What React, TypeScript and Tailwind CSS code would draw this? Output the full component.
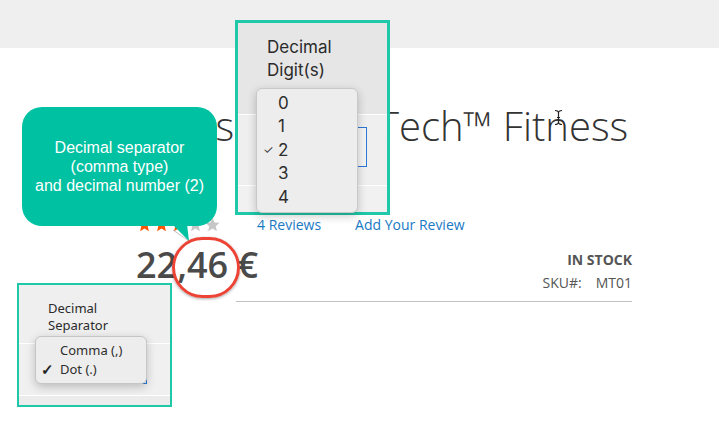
import React from "react";

function Star({ filled }: { filled: boolean }) {
  return (
    <svg width="17" height="17" viewBox="0 0 24 24" className="shrink-0">
      <path
        d="M12 2.5l2.9 6.6 7.1.6-5.4 4.7 1.6 7-6.2-3.7-6.2 3.7 1.6-7L2 9.7l7.1-.6z"
        fill={filled ? "#ff5501" : "#c7c7c7"}
      />
    </svg>
  );
}

function DigitsPanel() {
  const options = ["0", "1", "2", "3", "4"];
  return (
    <div className="absolute left-[235px] top-[20px] h-[195px] w-[155px] border-[3px] border-[#1ec8a8] bg-[#f1f1f1] font-['Inter',sans-serif]">
      <div className="flex h-[92px] flex-col border-b border-white bg-[#e6e6e6] pl-[29px] pt-[13px] text-[17px] leading-[23px] text-[#2b2b2b]">
        <span>Decimal</span>
        <span>Digit(s)</span>
      </div>
      <div className="h-[71px] border-b border-white bg-[#efefef] pl-[31px] pr-[20px] pt-[12px]">
        <div className="h-[40px] border border-[#2a78d6] bg-[#f4f4f4]" />
      </div>

      <div className="absolute left-[18px] top-[65px] w-[102px] rounded-[6px] border border-[#c9c9c9] bg-[#ededed] py-[3px] shadow-[0_3px_10px_rgba(0,0,0,0.22)]">
        {options.map((o) => (
          <div
            key={o}
            className="flex h-[23.4px] items-center text-[17px] text-[#2e2e2e]">
            <span className="w-[21px] pl-[6px] text-[12px] text-[#444]">
              {o === "2" ? "✓" : ""}
            </span>
            <span>{o}</span>
          </div>
        ))}
      </div>
    </div>
  );
}

function SeparatorPanel() {
  return (
    <div className="absolute left-[17px] top-[283px] h-[124px] w-[155px] border-2 border-[#1ec8a8] bg-[#ececec] font-['Noto_Sans',sans-serif]">
      <div className="flex h-[59px] flex-col border-b border-white bg-[#efefef] pl-[29px] pt-[15px] text-[13px] leading-[17px] text-[#2b2b2b]">
        <span>Decimal</span>
        <span>Separator</span>
      </div>
      <div className="h-[52px] border-b border-white bg-[#f0f0f0] pl-[29px] pr-[23px] pt-[15px]">
        <div className="h-[25px] border border-[#2a78d6] bg-[#f6f6f6]" />
      </div>

      <div className="absolute left-[16px] top-[51px] w-[112px] rounded-[6px] border border-[#c6c6c6] bg-[#ededed] py-[4px] shadow-[0_3px_10px_rgba(0,0,0,0.22)]">
        {["Comma (,)", "Dot (.)"].map((o) => (
          <div
            key={o}
            className="flex h-[19px] items-center text-[13px] text-[#2e2e2e]">
            <span className="w-[24px] pl-[5px] text-[15px] font-bold text-[#222]">
              {o === "Dot (.)" ? "✓" : ""}
            </span>
            <span>{o}</span>
          </div>
        ))}
      </div>
    </div>
  );
}

export default function App() {
  return (
    <div className="relative h-[422px] w-[719px] overflow-hidden bg-white font-['Open_Sans',sans-serif]">
      <div className="h-[48px] bg-[#efefef]" />

      <main className="ml-[136px] w-[496px] pt-[54px]">
        <h1 className="text-[40px] font-light leading-[48px] text-[#333]">
          <span className="block whitespace-nowrap">Press ProFlexTech™ Fitness</span>
          <span className="block">Kits</span>
        </h1>

        <div className="mt-[16px] flex h-[20px] items-center text-[14px] text-[#1979c3]">
          <div className="flex">
            {[true, true, true, false, false].map((f, i) => (
              <Star key={i} filled={f} />
            ))}
          </div>
          <a className="ml-[36px]">4 Reviews</a>
          <a className="ml-[34px]">Add Your Review</a>
        </div>

        <div className="mt-[10px] flex items-start justify-between">
          <span className="text-[36px] font-semibold leading-[42px] text-[#4a4a4a]">
            22,46 €
          </span>
          <div className="mt-[4px] flex flex-col items-end text-[14px] leading-[23px] text-[#555]">
            <span className="font-bold">IN STOCK</span>
            <span>
              SKU#:<span className="ml-[14px]">MT01</span>
            </span>
          </div>
        </div>

        <div className="ml-[100px] mt-[7px] border-t border-[#c1c1c1]" />
      </main>

      {/* callout */}
      <div className="absolute left-[22px] top-[107px] flex h-[119px] w-[195px] flex-col items-center justify-center rounded-[20px] bg-[#00c1a1] text-center font-['Liberation_Sans',sans-serif] text-[16px] leading-[19px] text-white">
        <span>Decimal separator</span>
        <span>(comma type)</span>
        <span>and decimal number (2)</span>
      </div>
      <svg
        className="absolute left-[170px] top-[224px]"
        width="24"
        height="20"
        viewBox="0 0 24 20">
        <path d="M3 6 L19 17" stroke="#9a9a9a" strokeWidth="1" opacity="0.6" />
        <path d="M2 0 L17 0 L19 17 Z" fill="#00c1a1" />
      </svg>

      {/* red circle */}
      <div className="absolute left-[172px] top-[237px] h-[61px] w-[68px] rounded-full border-[3px] border-[#ec4335] shadow-[0_1px_3px_rgba(0,0,0,0.35)]" />

      <DigitsPanel />
      <SeparatorPanel />

      {/* text cursor */}
      <svg
        className="absolute left-[554px] top-[109px]"
        width="9"
        height="17"
        viewBox="0 0 9 17">
        <path
          d="M1 1.5 Q4.5 1.5 4.5 4 L4.5 13 Q4.5 15.5 1 15.5 M8 1.5 Q4.5 1.5 4.5 4 M4.5 13 Q4.5 15.5 8 15.5 M3 8.5 L6 8.5"
          stroke="#222"
          strokeWidth="1.2"
          fill="none"
        />
      </svg>
    </div>
  );
}
